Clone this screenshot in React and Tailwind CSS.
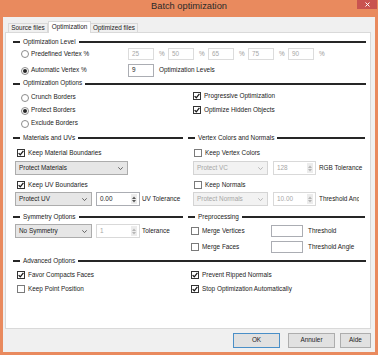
import React from 'react'

function Header({ title, className = '' }) {
  return (
    <div className={`flex items-center h-[12px] ${className}`}>
      <div className="w-[7px] h-[2px] bg-[#262626]" />
      <span className="px-[3px] whitespace-nowrap">{title}</span>
      <div className="flex-1 h-[2px] bg-[#262626]" />
    </div>
  )
}

function Radio({ checked, label, className = '' }) {
  return (
    <div className={`flex items-center ${className}`}>
      <div className="w-[8px] h-[8px] rounded-full border border-[#8c8c8c] bg-white flex items-center justify-center">
        {checked && <div className="w-[4px] h-[4px] rounded-full bg-[#262626]" />}
      </div>
      <span className="ml-[2px] whitespace-nowrap">{label}</span>
    </div>
  )
}

function Check({ checked, label, className = '' }) {
  return (
    <div className={`flex items-center ${className}`}>
      <div className={`w-[8px] h-[8px] border bg-white flex items-center justify-center ${checked ? 'border-[#333]' : 'border-[#7a7a7a]'}`}>
        {checked && (
          <svg width="6" height="6" viewBox="0 0 6 6">
            <path d="M0.6 3.1 L2.3 4.8 L5.4 0.9" fill="none" stroke="#1a1a1a" strokeWidth="1.3" />
          </svg>
        )}
      </div>
      <span className="ml-[3px] whitespace-nowrap">{label}</span>
    </div>
  )
}

function Select({ label, disabled, className = '' }) {
  return (
    <div className={`h-[14px] flex items-center justify-between border ${disabled ? 'border-[#d4d4d4] bg-[#f2f2f2] text-[#a6a6a6]' : 'border-[#acacac] bg-[#e6e6e6]'} ${className}`}>
      <span className="pl-[3px] whitespace-nowrap">{label}</span>
      <svg width="5" height="3" viewBox="0 0 5 3" className="mr-[4px]">
        <path d="M0.3 0.3 L2.5 2.6 L4.7 0.3" fill="none" stroke={disabled ? '#b0b0b0' : '#555'} strokeWidth="0.9" />
      </svg>
    </div>
  )
}

function Spin({ value, disabled, className = '' }) {
  return (
    <div className={`h-[14px] flex items-center justify-between border bg-white ${disabled ? 'border-[#d9d9d9] text-[#a6a6a6]' : 'border-[#abadb3]'} ${className}`}>
      <span className="pl-[3px]">{value}</span>
      <div className="w-[6px] h-[10px] mr-[2px] bg-[#ececec] flex flex-col items-center justify-center gap-[1px]">
        <svg width="4" height="3" viewBox="0 0 4 3"><path d="M0 3 L2 0.5 L4 3 Z" fill={disabled ? '#b5b5b5' : '#555'} /></svg>
        <svg width="4" height="3" viewBox="0 0 4 3"><path d="M0 0 L2 2.5 L4 0 Z" fill={disabled ? '#b5b5b5' : '#555'} /></svg>
      </div>
    </div>
  )
}

function Box({ value, disabled, className = '' }) {
  return (
    <div className={`flex items-center border bg-white ${disabled ? 'border-[#dcdcdc] text-[#a8a8a8]' : 'border-[#abadb3]'} ${className}`}>
      <span className="pl-[3px]">{value}</span>
    </div>
  )
}

export default function App() {
  const presets = ['25', '50', '65', '75', '90']

  return (
    <div className="w-[378px] h-[355px] bg-[#e98a5e] flex flex-col font-['Liberation_Sans',Arial,sans-serif] text-[6.4px] leading-none text-[#222] overflow-hidden">
      {/* Title bar */}
      <div className="h-[17px] relative flex items-center justify-center">
        <span className="text-[9.3px] text-[#2a2a2a] -mt-[3px]">Batch optimization</span>
        <div className="absolute right-[1px] top-0 w-[20px] h-[9px] bg-[#c95350] flex items-center justify-center">
          <svg width="5" height="5" viewBox="0 0 5 5">
            <path d="M0.5 0.5 L4.5 4.5 M4.5 0.5 L0.5 4.5" stroke="#fff" strokeWidth="1" />
          </svg>
        </div>
      </div>

      {/* Client */}
      <div className="mx-[3px] mb-[3px] flex-1 bg-[#f0f0f0] pt-[4px] flex flex-col">
        {/* Tabs */}
        <div className="h-[11px] ml-[5px] flex items-end">
          <div className="w-[40px] h-[9px] border border-b-0 border-[#d9d9d9] bg-[#f0f0f0] flex items-center justify-center">Source files</div>
          <div className="w-[43px] h-[12px] -mb-[1px] relative z-10 border border-b-0 border-[#d9d9d9] bg-white flex items-center justify-center">Optimization</div>
          <div className="w-[47px] h-[9px] border border-b-0 border-l-0 border-[#d9d9d9] bg-[#f0f0f0] flex items-center justify-center">Optimized files</div>
        </div>

        {/* Panel */}
        <div className="ml-[2px] w-[366px] h-[297px] border border-[#d9d9d9] bg-white pt-[3px] pl-[7px] pr-[4px] overflow-hidden">
          <Header title="Optimization Level" />
          <div className="h-[12px] flex items-center">
            <div className="w-[115px] pl-[8px]">
              <Radio label="Predefined Vertex %" />
            </div>
            {presets.map(p => (
              <div key={p} className="w-[40px] flex items-center text-[#9a9a9a]">
                <Box value={p} disabled className="w-[26px] h-[12px]" />
                <span className="ml-[5px]">%</span>
              </div>
            ))}
          </div>
          <div className="mt-[4px] h-[13px] flex items-center">
            <div className="w-[115px] pl-[8px]">
              <Radio checked label="Automatic Vertex %" />
            </div>
            <Box value="9" className="w-[26px] h-[13px]" />
            <span className="ml-[5px]">Optimization Levels</span>
          </div>

          <Header title="Optimization Options" className="mt-[1px] !h-[11px]" />
          <div className="grid grid-cols-[170px_177px] gap-x-[5px]">
            <div className="pt-[2px]">
              <Radio label="Crunch Borders" className="h-[13px] pl-[8px]" />
              <Radio checked label="Protect Borders" className="h-[13px] pl-[8px]" />
              <Radio label="Exclude Borders" className="h-[13px] pl-[8px]" />
            </div>
            <div>
              <Check checked label="Progressive Optimization" className="h-[14px] pl-[5px]" />
              <Check checked label="Optimize Hidden Objects" className="h-[14px] pl-[5px]" />
            </div>
          </div>

          <div className="mt-[2px] grid grid-cols-[170px_177px] gap-x-[5px]">
            <div>
              <Header title="Materials and UVs" />
              <Check checked label="Keep Material Boundaries" className="mt-[2px] h-[14px] pl-[4px]" />
              <Select label="Protect Materials" className="mt-[1px] ml-[2px] w-[113px]" />
              <Check checked label="Keep UV Boundaries" className="mt-[3px] h-[14px] pl-[4px]" />
              <div className="flex items-center">
                <Select label="Protect UV" className="ml-[2px] w-[77px]" />
                <Spin value="0.00" className="ml-[4px] w-[44px]" />
                <span className="ml-[2px] whitespace-nowrap">UV Tolerance</span>
              </div>
            </div>
            <div>
              <Header title="Vertex Colors and Normals" />
              <Check label="Keep Vertex Colors" className="mt-[2px] h-[14px] pl-[6px]" />
              <div className="mt-[1px] flex items-center">
                <Select label="Protect VC" disabled className="ml-[5px] w-[75px]" />
                <Spin value="128" disabled className="ml-[5px] w-[43px]" />
                <span className="ml-[3px] whitespace-nowrap">RGB Tolerance</span>
              </div>
              <Check label="Keep Normals" className="mt-[3px] h-[14px] pl-[6px]" />
              <div className="flex items-center">
                <Select label="Protect Normals" disabled className="ml-[5px] w-[75px]" />
                <Spin value="10.00" disabled className="ml-[5px] w-[43px]" />
                <span className="ml-[3px] w-[40px] overflow-hidden whitespace-nowrap">Threshold Angle</span>
              </div>
            </div>
          </div>

          <div className="mt-[5px] grid grid-cols-[170px_177px] gap-x-[5px]">
            <div>
              <Header title="Symmetry Options" />
              <div className="mt-[1px] flex items-center">
                <Select label="No Symmetry" className="ml-[2px] w-[77px]" />
                <Spin value="1" disabled className="ml-[4px] w-[44px]" />
                <span className="ml-[2px]">Tolerance</span>
              </div>
            </div>
            <div>
              <Header title="Preprocessing" />
              <div className="mt-[1px] h-[14px] flex items-center">
                <Check label="Merge Vertices" className="w-[83px] pl-[3px]" />
                <Box className="w-[32px] h-[12px]" />
                <span className="ml-[5px]">Threshold</span>
              </div>
              <div className="mt-[2px] h-[14px] flex items-center">
                <Check label="Merge Faces" className="w-[83px] pl-[3px]" />
                <Box className="w-[32px] h-[12px]" />
                <span className="ml-[5px]">Threshold Angle</span>
              </div>
            </div>
          </div>

          <Header title="Advanced Options" className="mt-[1px]" />
          <div className="mt-[1px] grid grid-cols-[170px_177px] gap-x-[5px]">
            <div>
              <Check checked label="Favor Compacts Faces" className="h-[14px] pl-[4px]" />
              <Check label="Keep Point Position" className="h-[14px] pl-[4px]" />
            </div>
            <div>
              <Check checked label="Prevent Ripped Normals" className="h-[14px] pl-[3px]" />
              <Check checked label="Stop Optimization Automatically" className="h-[14px] pl-[3px]" />
            </div>
          </div>
        </div>

        {/* Buttons */}
        <div className="mt-[4px] h-[15px] flex justify-end pr-[4px]">
          <button className="w-[47px] h-[15px] border border-[#4a8fc7] bg-[#e1e1e1] text-[6.4px] leading-none">OK</button>
          <button className="ml-[8px] w-[47px] h-[15px] border border-[#adadad] bg-[#e1e1e1] text-[6.4px] leading-none">Annuler</button>
          <button className="ml-[5px] w-[31px] h-[15px] border border-[#adadad] bg-[#e1e1e1] text-[6.4px] leading-none">Aide</button>
        </div>
      </div>
    </div>
  )
}
